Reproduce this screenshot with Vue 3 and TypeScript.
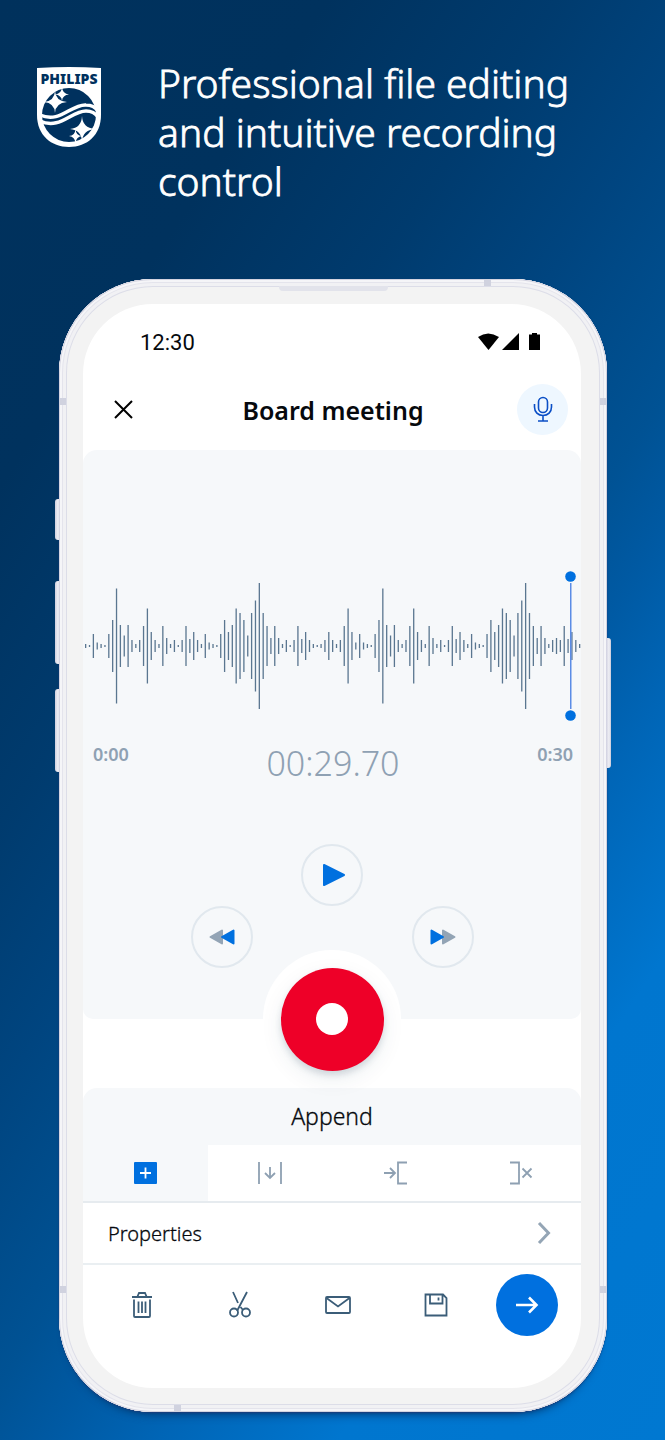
<script setup lang="ts">
import { ref } from 'vue'

const barHeights: number[] = [
  4, 2, 24, 7, 4, 2, 24, 52, 115, 42, 21, 42, 12, 4, 12, 40, 75, 28, 12, 4, 40, 16, 4, 12, 2, 12,
  40, 14, 28, 12, 4, 24, 7, 4, 2, 24, 52, 28, 42, 75, 66, 52, 21, 66, 91, 126, 66, 40, 16, 40, 16,
  4, 12, 2, 12, 40, 14, 28, 12, 4, 2, 4, 12, 28, 12, 4, 12, 40, 75, 28, 7, 24, 7, 4, 2, 24, 52,
  115, 42, 21, 42, 12, 4, 12, 40, 75, 28, 12, 4, 40, 16, 4, 12, 2, 12, 40, 14, 28, 12, 4, 24, 7,
  4, 2, 24, 52, 28, 42, 75, 66, 52, 21, 66, 91, 126, 66, 40, 16, 40, 16, 4, 12, 16, 12, 40, 14,
  28, 12, 4,
]
const barPitch = 494 / barHeights.length + 0.03
const bars = barHeights.map((height, i) => ({ x: 2 + i * barPitch, y: 75 - height / 2, height }))

type Mode = 'append' | 'insert' | 'overwrite' | 'cut'
const modes: { id: Mode; label: string }[] = [
  { id: 'append', label: 'Append' },
  { id: 'insert', label: 'Insert' },
  { id: 'overwrite', label: 'Overwrite' },
  { id: 'cut', label: 'Delete to end' },
]
const mode = ref<Mode>('append')
</script>

<template>
  <main class="page">
    <header class="hero">
      <svg class="logo" viewBox="0 0 64 80" role="img" aria-label="Philips">
        <path d="M0 1Q32-1 64 1V48C64 68 50 80 32 80S0 68 0 48Z" fill="#fff" />
        <text x="32" y="17" text-anchor="middle" class="logo-word">PHILIPS</text>
        <circle cx="32" cy="48" r="27" fill="#00315e" />
        <path d="M3 48C23 57 34 37 49 38Q57 38 61 44" fill="none" stroke="#fff" stroke-width="3.500" />
        <path d="M3 54C23 63 34 44 49 44Q57 44 61 50" fill="none" stroke="#fff" stroke-width="3.500" />
        <g fill="#fff">
          <path d="M18 24Q18.500 34 30 35Q18.500 36 18 46Q17.500 36 7 35Q17.500 34 18 24Z" />
          <path d="M25 20Q25.500 27 32 27.500Q25.500 28 25 34Q24.500 28 18 27.500Q24.500 27 25 20Z" />
          <path d="M45 49Q45.500 61 58 62Q45.500 63 45 75Q44.500 63 33 62Q44.500 61 45 49Z" />
          <path d="M38.500 62Q39 69 45 69Q39 70 38.500 76Q38 70 32 69Q38 69 38.500 62Z" />
        </g>
      </svg>
      <h1>Professional file editing and intuitive recording control</h1>
    </header>

    <section class="phone">
      <span class="side vol-a"></span>
      <span class="side vol-b"></span>
      <span class="side vol-c"></span>
      <span class="side power"></span>
      <span class="antenna a-left"></span>
      <span class="antenna a-right"></span>
      <span class="antenna a-left low"></span>
      <span class="antenna a-right low"></span>
      <span class="antenna a-top"></span>
      <span class="antenna a-bottom"></span>
      <span class="speaker"></span>

      <div class="screen">
        <div class="status">
          <span>12:30</span>
          <svg width="64" height="18" viewBox="0 0 64 18" aria-hidden="true">
            <path d="M0 4Q10-3 21 4L10.500 17Z" />
            <path d="M41 0V17H24Z" />
            <path d="M51 1.500H54V0H59V1.500H62V17H51Z" />
          </svg>
        </div>

        <div class="title-bar">
          <button class="round-btn" aria-label="Close">
            <svg width="20" height="20" viewBox="0 0 20 20" fill="none" stroke="#000" stroke-width="2">
              <path d="M1 1L18 18M18 1L1 18" />
            </svg>
          </button>
          <h2>Board meeting</h2>
          <button class="round-btn mic" aria-label="Microphone">
            <svg width="20" height="28" viewBox="0 0 20 28" fill="none" stroke="#0b4fc6" stroke-width="1.600">
              <rect x="5.500" y="1.500" width="9" height="15" rx="4.500" />
              <path d="M1.500 8V11C1.500 16 5 19.500 10 19.500S18.500 16 18.500 11V8M10 19.500V25M5 25H15" />
            </svg>
          </button>
        </div>

        <section class="recorder">
          <svg class="wave" viewBox="0 0 498 150" role="img" aria-label="Waveform">
            <rect v-for="(bar, i) in bars" :key="i" :x="bar.x" :y="bar.y" width="1.300" :height="bar.height" />
            <g fill="#0070df">
              <path d="M487 12H488.500V138H487Z" fill="#5b8ce6" />
              <circle cx="487.500" cy="5.500" r="5.300" />
              <circle cx="487.500" cy="144.500" r="5.300" />
            </g>
          </svg>
          <div class="times">
            <span>0:00</span>
            <strong>00:29.70</strong>
            <span>0:30</span>
          </div>
          <div class="controls">
            <button class="ring" aria-label="Play">
              <svg class="play" width="24" height="24" viewBox="0 0 24 24">
                <path d="M2 2L22 12L2 22Z" fill="#0070df" stroke="#0070df" stroke-width="2" stroke-linejoin="round" />
              </svg>
            </button>
            <div class="seek">
              <button class="ring" aria-label="Rewind">
                <svg width="26" height="16" viewBox="0 0 26 16" stroke-width="2" stroke-linejoin="round">
                  <path d="M13 1.500V14.500L1.500 8Z" fill="#93a4b5" stroke="#93a4b5" />
                  <path d="M24.500 1.500V14.500L13 8Z" fill="#0070df" stroke="#0070df" />
                </svg>
              </button>
              <button class="ring" aria-label="Fast forward">
                <svg width="26" height="16" viewBox="0 0 26 16" stroke-width="2" stroke-linejoin="round">
                  <path d="M13 1.500V14.500L24.500 8Z" fill="#93a4b5" stroke="#93a4b5" />
                  <path d="M1.500 1.500V14.500L13 8Z" fill="#0070df" stroke="#0070df" />
                </svg>
              </button>
            </div>
          </div>
        </section>

        <div class="halo">
          <button class="record" aria-label="Record"><span></span></button>
        </div>

        <section class="editing">
          <h3>Append</h3>
          <div class="modes">
            <button
              v-for="m in modes"
              :key="m.id"
              :class="{ active: mode === m.id }"
              :aria-label="m.label"
              :aria-pressed="mode === m.id"
              @click="mode = m.id"
            >
              <svg width="24" height="24" viewBox="0 0 24 24" fill="none" stroke="#8ea0b2" stroke-width="1.800">
                <g v-if="m.id === 'append'">
                  <rect x="1" y="1" width="23" height="22" rx="1" fill="#0070df" stroke="none" />
                  <path d="M12.500 6.500V17.500M7 12H18" stroke="#fff" />
                </g>
                <path v-else-if="m.id === 'insert'" d="M1 1V23M23 1V23M12 6V17M7 12L12 17L17 12" />
                <path v-else-if="m.id === 'overwrite'" d="M25 1.500H16V22.500H25M2 12H13M8 7L13 12L8 17" />
                <path v-else d="M3 1.500H12V22.500H3M15.500 7.500L24.500 16.500M24.500 7.500L15.500 16.500" />
              </svg>
            </button>
          </div>
        </section>

        <button class="properties">
          <span>Properties</span>
          <svg width="14" height="24" viewBox="0 0 14 24" fill="none" stroke="#94a5b5" stroke-width="3">
            <path d="M2 2L11.500 12L2 22" />
          </svg>
        </button>

        <nav class="toolbar">
          <button aria-label="Delete">
            <svg width="22" height="28" viewBox="0 0 22 28">
              <path d="M1 6H21M6.500 5.500L8 2H14L15.500 5.500M3 8.500V25Q3 26 4 26H18Q19 26 19 25V8.500M7.500 10.500V22M11 10.500V22M14.500 10.500V22" />
            </svg>
          </button>
          <button aria-label="Cut">
            <svg width="22" height="28" viewBox="0 0 22 28">
              <path d="M4 1L9 12M18 1L8 20M11.500 16L14 19" />
              <circle cx="5" cy="21.500" r="4" />
              <circle cx="17" cy="21.500" r="4" />
            </svg>
          </button>
          <button aria-label="Mail">
            <svg width="28" height="20" viewBox="0 0 28 20">
              <rect x="2" y="2" width="24" height="16" rx="1" />
              <path d="M2.500 3L14 11.500L25.500 3" />
            </svg>
          </button>
          <button aria-label="Save">
            <svg width="24" height="24" viewBox="0 0 24 24">
              <path d="M1.500 1.500H19L22.500 5V22.500H1.500ZM6 1.500V10.500H18.500V1.500M14.500 4.500V7.500" />
            </svg>
          </button>
          <button class="next" aria-label="Next">
            <svg class="arrow" width="24" height="18" viewBox="0 0 24 18">
              <path d="M1 9H21M14 1.500L21.500 9L14 16.500" />
            </svg>
          </button>
        </nav>
      </div>
    </section>
  </main>
</template>

<style>
body {
  margin: 0;
}
</style>

<style scoped>
* {
  box-sizing: border-box;
}
h1,
h2,
h3 {
  margin: 0;
  font-weight: 400;
}
button {
  border: 0;
  padding: 0;
  background: none;
  font: inherit;
  color: inherit;
  cursor: pointer;
}
svg {
  display: block;
}
.page {
  min-height: 100vh;
  padding-bottom: 29px;
  font-family: 'Noto Sans', 'Open Sans', sans-serif;
  color: #06090d;
  background: linear-gradient(124deg, #00315c 0%, #00325e 20%, #003b6e 34%, #004580 45%, #005294 57%, #0059a2 62%, #0065b6 69%, #0076cf 80%, #0078d1 100%);
}
.hero {
  display: flex;
  align-items: flex-start;
  gap: 57px;
  height: 279px;
  padding: 58px 60px 0 37px;
}
.logo {
  flex: none;
  width: 64px;
  height: 80px;
  margin-top: 9px;
}
.logo-word {
  font-size: 14px;
  font-weight: 900;
  fill: #00315e;
}
h1 {
  color: #fff;
  font-size: 39px;
  font-weight: 300;
  line-height: 49px;
  -webkit-text-stroke: 0.8px #fff;
}
.phone {
  position: relative;
  margin: 0 58px 0 59px;
  padding: 25px 26px 24px 24px;
  border-radius: 94px;
  background: #f3f3f3;
  box-shadow:
    inset 0 0 0 1px #d3d3e0,
    inset 0 0 0 3px #f5f5f8,
    inset 0 0 0 4px #e4e4ec,
    inset 0 0 0 7px #f1f1f4,
    inset 0 0 0 8px #dcdde8,
    0 1px 2px #1d3c7a,
    0 10px 10px -8px #00386f;
}
.side,
.antenna,
.speaker {
  position: absolute;
}
.side {
  left: -4px;
  width: 5px;
  border-radius: 3px 0 0 3px;
  background: linear-gradient(90deg, #cfcfe0, #f0f0f5 60%, #c9c9da);
}
.vol-a {
  top: 220px;
  height: 41px;
}
.vol-b {
  top: 302px;
  height: 83px;
}
.vol-c {
  top: 410px;
  height: 83px;
}
.power {
  left: auto;
  right: -4px;
  top: 359px;
  height: 130px;
  border-radius: 0 3px 3px 0;
}
.antenna {
  width: 7px;
  height: 7px;
  background: #d0d2df;
}
.a-left {
  left: 0;
  top: 119px;
}
.a-right {
  right: 0;
  top: 119px;
}
.low {
  top: auto;
  bottom: 119px;
}
.a-top {
  top: 0;
  right: 116px;
}
.a-bottom {
  bottom: 0;
  left: 115px;
}
.speaker {
  top: 7px;
  left: 50%;
  width: 109px;
  height: 5px;
  margin-left: -54px;
  border-radius: 0 0 4px 4px;
  background: #e2e3eb;
}
.screen {
  overflow: hidden;
  padding-bottom: 43px;
  border-radius: 70px;
  background: #fff;
}
.status {
  display: flex;
  justify-content: space-between;
  align-items: center;
  height: 76px;
  padding: 0 39px 0 57px;
  font-family: Roboto, sans-serif;
  font-size: 22px;
}
.title-bar {
  display: grid;
  grid-template-columns: 51px 1fr 51px;
  align-items: center;
  padding: 4px 13px 15px 15px;
}
h2 {
  font-size: 25px;
  font-weight: 600;
  line-height: 34px;
  text-align: center;
}
.round-btn,
.ring,
.record,
.next {
  display: flex;
  align-items: center;
  justify-content: center;
  border-radius: 50%;
}
.round-btn {
  width: 51px;
  height: 51px;
}
.mic {
  background: #eef7ff;
}
.recorder {
  padding: 121px 0 51px;
  border-radius: 14px 14px 10px 10px;
  background: #f6f8fa;
}
.wave {
  width: 100%;
  height: auto;
  fill: #5a7690;
}
.times {
  display: flex;
  justify-content: space-between;
  padding: 17px 8px 0 10px;
  font-size: 18px;
  font-weight: 600;
  line-height: 32px;
  color: #8fa1b3;
}
.times strong {
  font-size: 34px;
  font-weight: 300;
  line-height: 50px;
}
.controls {
  display: flex;
  flex-direction: column;
  align-items: center;
  padding-top: 56px;
}
.ring {
  width: 62px;
  height: 62px;
  border: 2px solid #e1e8ee;
}
.play {
  margin-left: 4px;
}
.seek {
  display: flex;
  gap: 159px;
}
.halo {
  position: relative;
  display: flex;
  align-items: center;
  justify-content: center;
  width: 138px;
  height: 138px;
  margin: -69px auto 0;
  border-radius: 50%;
  background: #fff;
}
.record {
  width: 103px;
  height: 103px;
  background: #ee0028;
  box-shadow: 0 4px 6px rgba(30, 60, 90, 0.16), 0 8px 22px rgba(30, 60, 90, 0.08);
}
.record span {
  width: 32px;
  height: 32px;
  border-radius: 50%;
  background: #fff;
}
.editing {
  border-radius: 14px 14px 0 0;
  border-bottom: 2px solid #e6ebef;
  background: #f6f8fa;
}
h3 {
  font-size: 23px;
  font-weight: 300;
  line-height: 57px;
  text-align: center;
  -webkit-text-stroke: 0.3px #06090d;
}
.modes {
  display: grid;
  grid-template-columns: repeat(4, 1fr);
}
.modes button {
  display: flex;
  align-items: center;
  justify-content: center;
  height: 56px;
  background: #fff;
}
.modes svg {
  overflow: visible;
}
.modes .active {
  background: #f6f8fa;
}
.properties {
  display: flex;
  align-items: center;
  justify-content: space-between;
  width: 100%;
  height: 62px;
  padding: 0 30px 0 25px;
  border-bottom: 2px solid #eaeff2;
  font-size: 20px;
  font-weight: 300;
  -webkit-text-stroke: 0.3px #06090d;
}
.toolbar {
  display: grid;
  grid-template-columns: repeat(4, 1fr) 84px;
  align-items: center;
  justify-items: center;
  height: 80px;
  padding: 0 12px 0 10px;
}
.toolbar svg {
  fill: none;
  stroke: #3b5d78;
  stroke-width: 1.8;
}
.next {
  width: 62px;
  height: 62px;
  background: #0070df;
}
.toolbar .arrow {
  stroke: #fff;
  stroke-width: 2.6;
}
</style>
